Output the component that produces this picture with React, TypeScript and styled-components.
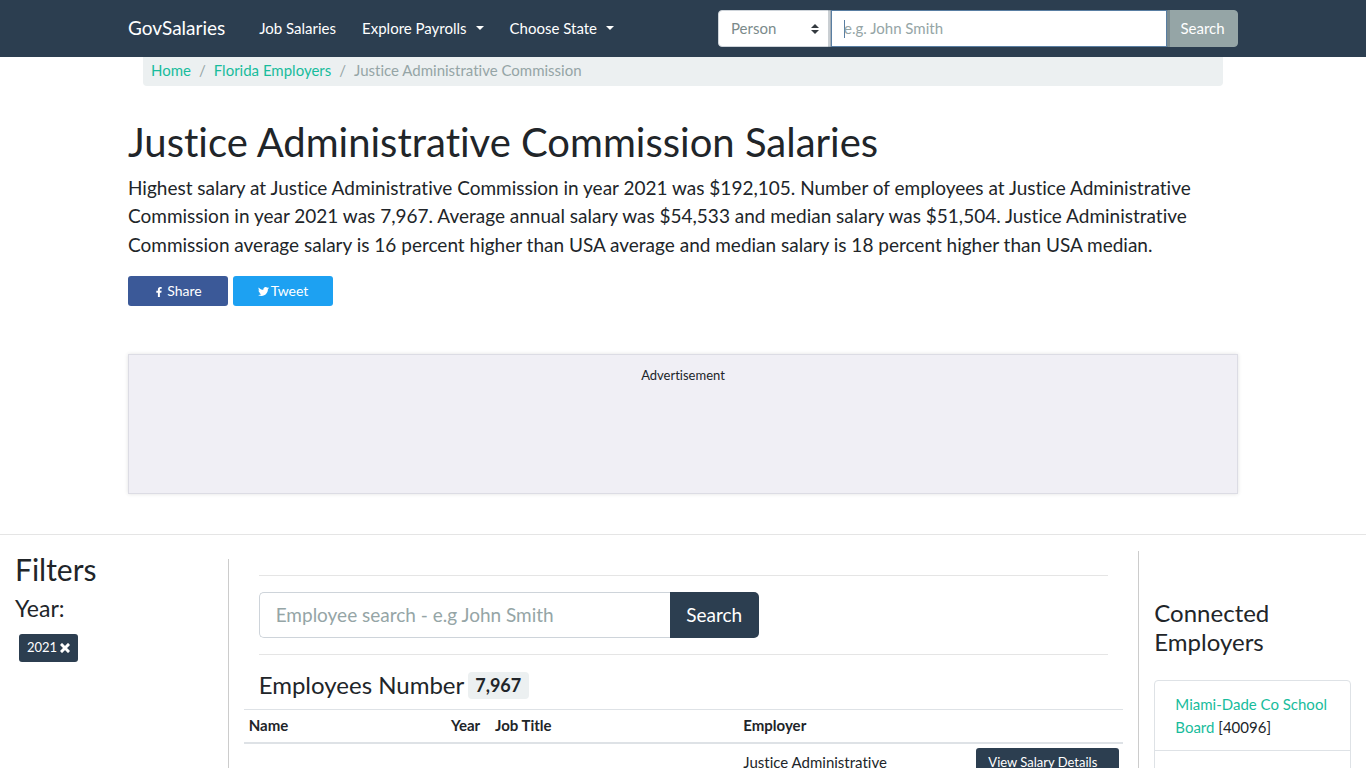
import React from 'react';
import styled, { createGlobalStyle } from 'styled-components';
import { FaFacebookF, FaTwitter } from 'react-icons/fa';

const navy = '#2c3e50';
const green = '#18bc9c';
const grey = '#95a5a6';
const pale = '#ecf0f1';
const line = '#dee2e6';

const GlobalStyle = createGlobalStyle`
  *, *::before, *::after { box-sizing: border-box; }
  html { scrollbar-width: none; }
  body {
    margin: 0;
    background: #fff;
    color: #212529;
    font-family: Lato, 'Liberation Sans', sans-serif;
    font-size: 15px;
    font-variant-ligatures: none;
    line-height: 1.5;
  }
  h1, h2, h3, h4, p { margin: 0; font-weight: 400; line-height: 1.2; }
  a { color: ${green}; text-decoration: none; }
  button, input, select { font: inherit; margin: 0; }
  button { cursor: pointer; }
`;

const Container = styled.div`
  width: 100%;
  max-width: 1140px;
  margin: 0 auto;
  padding: 0 15px;
`;

const Header = styled.header`
  background: ${navy};
`;

const Bar = styled(Container)`
  display: flex;
  align-items: center;
  min-height: 57px;
`;

const Brand = styled.a`
  margin-right: 26px;
  color: #fff;
  font-size: 19px;
`;

const NavMenu = styled.nav`
  display: flex;
  flex: 1;
  gap: 10px;
`;

const NavLink = styled.a`
  padding: 8px;
  color: #fff;
  white-space: nowrap;
`;

const Caret = styled.span`
  display: inline-block;
  margin-left: 9px;
  vertical-align: 4px;
  border: 4px solid transparent;
  border-top-color: #fff;
  border-bottom: 0;
`;

const HeaderSearch = styled.form`
  display: flex;
  width: 520px;
  height: 37px;
`;

const SelectWrap = styled.div`
  position: relative;
  width: 113px;
`;

const KindSelect = styled.select`
  appearance: none;
  width: 100%;
  height: 100%;
  padding: 0 28px 0 12px;
  border: 1px solid #ced4da;
  border-radius: 4px 0 0 4px;
  background: #fff;
  color: #7b8a8b;
`;

const SelectArrow = styled.svg`
  position: absolute;
  top: 14px;
  right: 12px;
  pointer-events: none;
`;

const PersonInput = styled.input`
  position: relative;
  z-index: 1;
  flex: 1;
  min-width: 0;
  padding: 0 12px;
  border: 1px solid #597ea2;
  border-radius: 0;
  outline: 0;
  background: linear-gradient(#597ea2, #597ea2) 12px center / 1px 18px no-repeat #fff;
  box-shadow: 0 0 0 3px rgba(44, 62, 80, 0.25);
  &::placeholder { color: ${grey}; opacity: 1; }
`;

const HeaderButton = styled.button`
  width: 71px;
  padding: 0;
  border: 1px solid ${grey};
  border-radius: 0 4px 4px 0;
  background: ${grey};
  color: #fff;
`;

const Crumbs = styled.ol`
  display: flex;
  margin: 0 15px 32px;
  padding: 2px 8px 4px;
  border-radius: 0 0 4px 4px;
  background: ${pale};
  color: ${grey};
  list-style: none;
  li + li::before { content: '/'; padding: 0 8px; }
`;

const Title = styled.h1`
  margin-bottom: 8px;
  font-size: 40px;
`;

const Lead = styled.p`
  margin-bottom: 17px;
  font-size: 19px;
  line-height: 1.5;
`;

const ShareRow = styled.div`
  display: flex;
  gap: 5px;
  margin-bottom: 48px;
`;

const ShareButton = styled.button<{ $tone: string; $gap: number }>`
  display: flex;
  align-items: center;
  justify-content: center;
  gap: ${(p) => p.$gap}px;
  width: 100px;
  height: 30px;
  padding: 0 0 2px;
  border: 0;
  border-radius: 3px;
  background: ${(p) => p.$tone};
  color: #fff;
  font-size: 14px;
  svg { margin-top: 3px; }
`;

const AdSlot = styled.aside`
  min-height: 140px;
  margin-bottom: 40px;
  padding: 11px;
  border: 1px solid #dcdce4;
  background: #f0eff5;
  box-shadow: 0 0 4px rgba(0, 0, 0, 0.12);
  font-size: 13px;
  text-align: center;
`;

const Rule = styled.hr`
  margin: 0 0 16px;
  border: 0;
  border-top: 1px solid #e5e5e5;
`;

const Columns = styled.div`
  display: grid;
  grid-template-columns: minmax(0, 2fr) minmax(0, 8fr) minmax(0, 2fr);
`;

const Filters = styled.section`
  padding: 0 15px;
`;

const FiltersTitle = styled.h2`
  margin-bottom: 8px;
  font-size: 30px;
`;

const SubTitle = styled.h3`
  font-size: 23px;
`;

const FilterChip = styled.button`
  display: flex;
  align-items: center;
  gap: 3px;
  height: 28px;
  margin: 11px 4px;
  padding: 0 8px;
  border: 0;
  border-radius: 3px;
  background: ${navy};
  color: #fff;
  font-size: 13px;
`;

const Results = styled.main`
  margin-top: 8px;
  padding: 16px 15px 0;
  border-left: 1px solid #ccc;
`;

const ResultsHead = styled.div`
  padding: 0 15px 10px;
`;

const EmployeeSearch = styled.form`
  display: flex;
  max-width: 500px;
  height: 46px;
  margin-bottom: 16px;
`;

const EmployeeInput = styled.input`
  flex: 1;
  min-width: 0;
  padding: 0 16px;
  border: 1px solid #ced4da;
  border-right: 0;
  border-radius: 5px 0 0 5px;
  font-size: 19px;
  &::placeholder { color: ${grey}; opacity: 1; }
`;

const EmployeeButton = styled.button`
  width: 89px;
  padding: 0;
  border: 0;
  border-radius: 0 5px 5px 0;
  background: ${navy};
  color: #fff;
  font-size: 19px;
`;

const CountTitle = styled.h3`
  display: flex;
  align-items: center;
  gap: 4px;
  height: 28px;
  font-size: 24px;
`;

const Count = styled.span`
  align-self: flex-end;
  padding: 4px 8px 4px 7px;
  border-radius: 4px;
  background: ${pale};
  font-size: 18px;
  font-weight: 700;
  line-height: 19px;
`;

const Table = styled.table`
  width: 100%;
  border-collapse: separate;
  border-spacing: 0;
  table-layout: fixed;
  th, td { padding: 4px 4px 6px 5px; text-align: left; vertical-align: top; }
  th {
    border-top: 1px solid ${line};
    border-bottom: 2px solid ${line};
    line-height: 22px;
  }
  td { padding-top: 7px; }
  td:last-child { padding-top: 4px; }
`;

const Col = styled.col<{ $w: string }>`
  width: ${(p) => p.$w};
`;

const DetailsLink = styled.a`
  display: block;
  padding: 4px 12px;
  border-radius: 3px;
  background: ${navy};
  color: #fff;
  font-size: 13px;
  line-height: 20px;
`;

const Connected = styled.aside`
  padding: 48px 15px 0;
  border-left: 1px solid #ccc;
`;

const ConnectedTitle = styled.h3`
  margin-bottom: 23px;
  font-size: 24px;
`;

const EmployerList = styled.ul`
  margin: 0;
  padding: 0;
  border: 1px solid ${line};
  border-radius: 4px;
  list-style: none;
`;

const EmployerItem = styled.li`
  min-height: 69px;
  padding: 12px 20px 11px;
  line-height: 23px;
  & + & { border-top: 1px solid ${line}; }
`;

export default function App() {
  return (
    <>
      <GlobalStyle />
      <Header>
        <Bar>
          <Brand href="#">GovSalaries</Brand>
          <NavMenu>
            <NavLink href="#jobs">Job Salaries</NavLink>
            <NavLink href="#payrolls">Explore Payrolls<Caret /></NavLink>
            <NavLink href="#states">Choose State<Caret /></NavLink>
          </NavMenu>
          <HeaderSearch>
            <SelectWrap>
              <KindSelect aria-label="Search type"><option>Person</option></KindSelect>
              <SelectArrow width="8" height="10" viewBox="0 0 4 5">
                <path fill="#343a40" d="M2 0L0 2h4zm0 5L0 3h4z" />
              </SelectArrow>
            </SelectWrap>
            <PersonInput aria-label="Person name" placeholder="e.g. John Smith" />
            <HeaderButton type="button">Search</HeaderButton>
          </HeaderSearch>
        </Bar>
      </Header>

      <Container>
        <Crumbs>
          <li><a href="#home">Home</a></li>
          <li><a href="#florida">Florida Employers</a></li>
          <li>Justice Administrative Commission</li>
        </Crumbs>
        <Title>Justice Administrative Commission Salaries</Title>
        <Lead>
          Highest salary at Justice Administrative Commission in year 2021 was $192,105. Number of
          employees at Justice Administrative Commission in year 2021 was 7,967. Average annual
          salary was $54,533 and median salary was $51,504. Justice Administrative Commission
          average salary is 16 percent higher than USA average and median salary is 18 percent
          higher than USA median.
        </Lead>
        <ShareRow>
          <ShareButton type="button" $tone="#3b5998" $gap={3}><FaFacebookF size={10} />Share</ShareButton>
          <ShareButton type="button" $tone="#1da1f2" $gap={2}><FaTwitter size={11} />Tweet</ShareButton>
        </ShareRow>
        <AdSlot>Advertisement</AdSlot>
      </Container>

      <Rule />
      <Columns>
        <Filters>
          <FiltersTitle>Filters</FiltersTitle>
          <SubTitle>Year:</SubTitle>
          <FilterChip type="button">
            2021
            <svg width="10" height="10" viewBox="0 0 10 10" aria-hidden="true">
              <path d="M2 2l6 6M8 2l-6 6" stroke="#fff" strokeWidth="3" strokeLinecap="square" />
            </svg>
          </FilterChip>
        </Filters>

        <Results>
          <ResultsHead>
            <Rule />
            <EmployeeSearch>
              <EmployeeInput aria-label="Employee search" placeholder="Employee search - e.g John Smith" />
              <EmployeeButton type="button">Search</EmployeeButton>
            </EmployeeSearch>
            <Rule />
            <CountTitle>Employees Number <Count>7,967</Count></CountTitle>
          </ResultsHead>
          <Table>
            <colgroup>
              <Col $w="23%" />
              <Col $w="5%" />
              <Col $w="auto" />
              <Col $w="233px" />
              <Col $w="152px" />
            </colgroup>
            <thead>
              <tr><th>Name</th><th>Year</th><th>Job Title</th><th>Employer</th><th aria-label="Details" /></tr>
            </thead>
            <tbody>
              <tr>
                <td /><td /><td />
                <td>Justice Administrative Commission</td>
                <td><DetailsLink href="#details">View Salary Details</DetailsLink></td>
              </tr>
            </tbody>
          </Table>
        </Results>

        <Connected>
          <ConnectedTitle>Connected Employers</ConnectedTitle>
          <EmployerList>
            <EmployerItem><a href="#miami">Miami-Dade Co School Board</a> [40096]</EmployerItem>
            <EmployerItem />
          </EmployerList>
        </Connected>
      </Columns>
    </>
  );
}
